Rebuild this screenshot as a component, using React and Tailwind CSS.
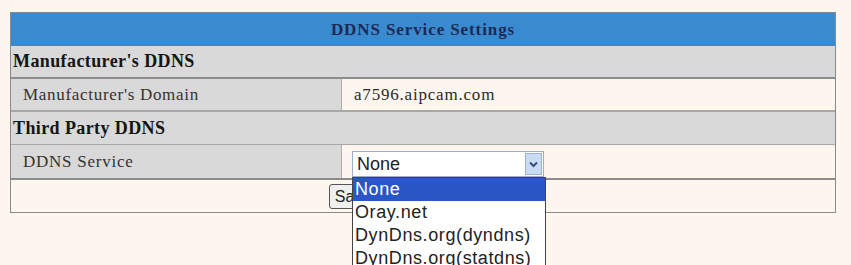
import React from "react";

const serif = { fontFamily: '"Liberation Serif", "Times New Roman", serif' };
const sans = { fontFamily: '"Liberation Sans", Arial, sans-serif' };

const options = ["None", "Oray.net", "DynDns.org(dyndns)", "DynDns.org(statdns)"];

export default function App() {
  return (
    <div className="w-[851px] h-[265px] overflow-hidden bg-[#fdf6ef] pt-3 pl-[10px]" style={serif}>
      <div className="w-[826px] border border-[#8a8a8a] bg-[#fdf6ef]">
        <div className="h-[33px] bg-[#3a8ad0] flex items-center justify-center text-[17px] tracking-[0.9px] font-bold text-[#1c2a55]">
          DDNS Service Settings
        </div>
        <div className="h-[33px] bg-[#d9d9d9] border-b-2 border-[#8c8c8c] flex items-center pl-[2px] text-[18px] tracking-[0.4px] font-bold text-[#151515]">
          Manufacturer's DDNS
        </div>
        <div className="h-[33px] flex border-b-2 border-[#a8a8a8]">
          <div className="w-[331px] bg-[#d9d9d9] border-r border-[#b0b0b0] flex items-center pl-3 text-[17px] tracking-[0.7px] text-[#333]">
            Manufacturer's Domain
          </div>
          <div className="flex-1 flex items-center pl-3 text-[17px] tracking-[0.8px] text-[#2a2a2a]">a7596.aipcam.com</div>
        </div>
        <div className="h-[33px] bg-[#d9d9d9] border-b border-[#a8a8a8] flex items-center pl-[2px] text-[18px] tracking-[0.4px] font-bold text-[#151515]">
          Third Party DDNS
        </div>
        <div className="h-[35px] flex border-b-2 border-[#8c8c8c]">
          <div className="w-[331px] bg-[#d9d9d9] border-r border-[#b0b0b0] flex items-center pl-3 text-[17px] tracking-[0.75px] text-[#333]">
            DDNS Service
          </div>
          <div className="flex-1 flex items-center pl-[10px] pt-[5px]">
            <div className="relative w-[192px] h-[26px] bg-white border border-[#9bb0c8] flex items-center" style={sans}>
              <span className="pl-[4px] text-[18px] text-[#222]">None</span>
              <div className="ml-auto mr-[1px] w-[17px] h-[22px] bg-[#c9dcf3] border border-[#9ab4d8] flex items-center justify-center">
                <svg width="9" height="7" viewBox="0 0 9 7">
                  <path d="M1 1.5 L4.5 5 L8 1.5" stroke="#3a4f78" strokeWidth="2" fill="none" />
                </svg>
              </div>
              <div className="absolute left-[-1px] top-[25px] w-[194px] bg-white border border-[#444] z-10">
                {options.map((o, i) => (
                  <div
                    key={o}
                    className={`h-[23px] flex items-center pl-[2px] text-[18px] tracking-[0.6px] ${i === 0 ? "bg-[#2a57c6] text-white" : "text-[#222]"}`}
                  >
                    {o}
                  </div>
                ))}
              </div>
            </div>
          </div>
        </div>
        <div className="h-[32px] flex items-center justify-center pl-[2px]">
          <button className="h-[25px] px-[5px] mr-[142px] border border-[#555] rounded-[3px] bg-[#efefef] text-[16px] text-[#222]" style={sans}>
            Save
          </button>
        </div>
      </div>
    </div>
  );
}
